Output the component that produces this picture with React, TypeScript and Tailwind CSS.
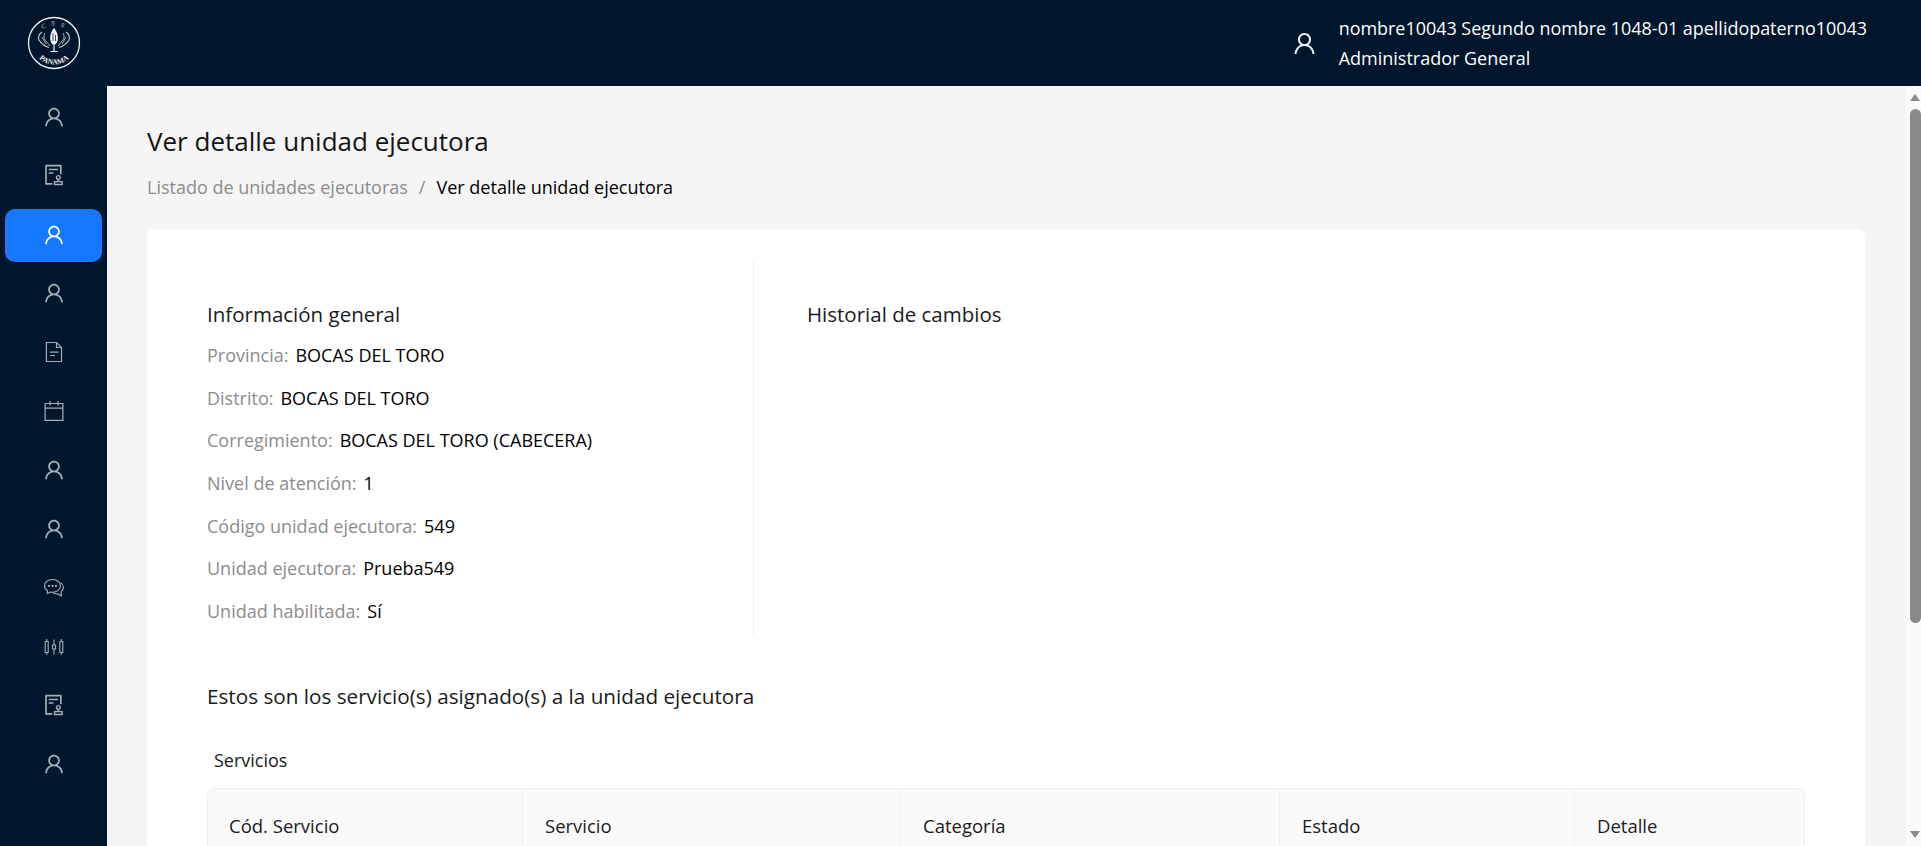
import { AiOutlineAudit, AiOutlineUser } from "react-icons/ai";
import type { ComponentType } from "react";

type IconProps = { size?: number };

function ChatIcon({ size = 22 }: IconProps) {
  return (
    <svg width={size} height={size} viewBox="0 0 22 22" fill="none" stroke="currentColor" strokeWidth="1.1">
      <path d="M9.500 2.500c-4.400 0-8 2.700-8 6.300 0 2 1.100 3.700 3 4.900l-.2 2.800 3-1.500c.7.1 1.400.2 2.200.2 4.400 0 8-2.800 8-6.400s-3.600-6.300-8-6.300z" />
      <path d="M17.800 5.600c1.700 1.100 2.700 2.800 2.700 4.700 0 1.800-.9 3.400-2.400 4.500l.3 4-3.700-1.900c-1.800.2-4-.4-5.200-1.500" />
      <circle cx="6" cy="8.800" r=".6" fill="currentColor" />
      <circle cx="9.500" cy="8.800" r=".6" fill="currentColor" />
      <circle cx="13" cy="8.800" r=".6" fill="currentColor" />
    </svg>
  );
}

function DocIcon({ size = 22 }: IconProps) {
  return (
    <svg width={size} height={size} viewBox="0 0 22 22" fill="none" stroke="currentColor" strokeWidth="1.200">
      <path d="M3.400 1.500h10.100l5 5v14H3.400z" />
      <path d="M13.500 1.500v5h5M7 11.200h8.500M7 14.500h5" />
    </svg>
  );
}

function CalendarIcon({ size = 22 }: IconProps) {
  return (
    <svg width={size} height={size} viewBox="0 0 22 22" fill="none" stroke="currentColor" strokeWidth="1.200">
      <path d="M2.100 3.500h17.800v16.900H2.100zM2.100 8.200h17.800M7 1v4.500M15 1v4.500" />
    </svg>
  );
}

function CandleIcon({ size = 22 }: IconProps) {
  return (
    <svg width={size} height={size} viewBox="0 0 22 22" fill="none" stroke="currentColor" strokeWidth="1.100">
      <path d="M2.200 5.500h3v11h-3zM3.700 3v2.500M3.700 16.500V19M9.500 9h3v4h-3zM11 3.500V9M11 13v5.500M16.800 5.500h3v11h-3zM18.300 3v2.500M18.300 16.500V19" />
    </svg>
  );
}

function UserIcon({ size = 24 }: IconProps) {
  return <AiOutlineUser size={size + 2} />;
}

function AuditIcon({ size = 24 }: IconProps) {
  return <AiOutlineAudit size={size + 2} />;
}

function Logo() {
  return (
    <svg width="54" height="54" viewBox="0 0 54 54" fill="none">
      <circle cx="27" cy="27" r="25.500" stroke="#f2f4f6" strokeWidth="1.300" />
      <path id="logo-top" d="M9.500 27a17.500 17.500 0 0 1 35 0" stroke="none" />
      <path id="logo-bottom" d="M5.500 27a21.500 21.500 0 0 0 43 0" stroke="none" />
      <text fontSize="6.500" fill="#c8cdd3" fontFamily="'Liberation Serif', serif" letterSpacing="5" textAnchor="middle">
        <textPath href="#logo-top" startOffset="52%">CSS</textPath>
      </text>
      <text fontSize="7.500" fontWeight="700" fill="#eef0f2" fontFamily="'Liberation Serif', serif" textAnchor="middle">
        <textPath href="#logo-bottom" startOffset="50%">PANAMA</textPath>
      </text>
      <path d="M27 12c-3.500 4-4.500 9-3.500 13 .6 2.200 2 3.500 3.500 4 1.500-.5 2.900-1.800 3.500-4 1-4 0-9-3.500-13z" fill="#f2f4f6" />
      <path d="M26 17v8M28.500 19v6" stroke="#3b4a5a" strokeWidth="1" />
      <path d="M27 29v6M23.500 35.500h7" stroke="#f2f4f6" strokeWidth="1.200" />
      <path d="M15 16c-3 2-4 5-3 8 2 3.500 5 6 10 7.500M39 16c3 2 4 5 3 8-2 3.500-5 6-10 7.500" stroke="#c9ced4" strokeWidth="1.100" />
      <path d="M18 17c-2 3-1 6 1 8l4 5M36 17c2 3 1 6-1 8l-4 5M15 21l4 7M39 21l-4 7" stroke="#aeb5bd" strokeWidth="1" />
    </svg>
  );
}

const menu: { icon: ComponentType<IconProps>; active?: boolean }[] = [
  { icon: UserIcon },
  { icon: AuditIcon },
  { icon: UserIcon, active: true },
  { icon: UserIcon },
  { icon: DocIcon },
  { icon: CalendarIcon },
  { icon: UserIcon },
  { icon: UserIcon },
  { icon: ChatIcon },
  { icon: CandleIcon },
  { icon: AuditIcon },
  { icon: UserIcon },
];

const info = [
  ["Provincia:", "BOCAS DEL TORO"],
  ["Distrito:", "BOCAS DEL TORO"],
  ["Corregimiento:", "BOCAS DEL TORO (CABECERA)"],
  ["Nivel de atención:", "1"],
  ["Código unidad ejecutora:", "549"],
  ["Unidad ejecutora:", "Prueba549"],
  ["Unidad habilitada:", "Sí"],
];

const columns = [
  { label: "Cód. Servicio", width: "w-[315px]", pad: "pl-[21px]" },
  { label: "Servicio", width: "w-[378px]", pad: "pl-[22px]" },
  { label: "Categoría", width: "w-[379px]", pad: "pl-[22px]" },
  { label: "Estado", width: "w-[295px]", pad: "pl-[22px]" },
  { label: "Detalle", width: "flex-1", pad: "pl-[22px]" },
];

export default function App() {
  return (
    <div className="flex h-[846px] w-full flex-col overflow-hidden bg-[#f5f5f5] font-['Open_Sans','Liberation_Sans',sans-serif] text-[18px] text-[#1a1a1a]">
      <header className="flex h-[86px] shrink-0 items-center justify-between bg-[#00162c] text-white">
        <div className="flex w-[107px] justify-center">
          <Logo />
        </div>
        <div className="flex items-center gap-[21px] pr-[54px]">
          <AiOutlineUser size={27} className="text-[#f2f4f6]" />
          <div>
            <div className="text-[17.950px] leading-[30px]">nombre10043 Segundo nombre 1048-01 apellidopaterno10043</div>
            <div className="text-[18px] leading-[30px] font-medium">Administrador General</div>
          </div>
        </div>
      </header>
      <div className="flex min-h-0 flex-1">
        <nav className="flex w-[107px] shrink-0 flex-col items-center gap-[5.900px] bg-[#00162c] px-[5px] pt-[5px]">
          {menu.map((item, i) => {
            const Icon = item.icon;
            return (
              <div
                key={i}
                className={
                  item.active
                    ? "flex h-[53px] w-full items-center justify-center rounded-[10px] bg-[#1677ff] pb-[1px] text-white"
                    : "flex h-[53px] w-full items-center justify-center pb-[2px] text-[#a6adb4]"
                }
              >
                <Icon size={22} />
              </div>
            );
          })}
        </nav>
        <main className="min-w-0 flex-1 overflow-hidden pt-[39px] pl-[40px] pr-[41px]">
          <h1 className="text-[26px] leading-[32px] font-medium text-[#141414]">Ver detalle unidad ejecutora</h1>
          <div className="mt-[18px] flex gap-[11px] text-[18px] leading-[24px]">
            <span className="text-[#8c8c8c]">Listado de unidades ejecutoras</span>
            <span className="text-[#8c8c8c]">/</span>
            <span className="text-black">Ver detalle unidad ejecutora</span>
          </div>
          <section className="mt-[30px] rounded-[8px] bg-white px-[60px] pt-[32px]">
            <div className="flex">
              <div className="w-[547px] border-r border-[#f0f0f0] pt-[39px] pb-[3px]">
                <h2 className="text-[20.500px] leading-[28px]">Información general</h2>
                <dl className="mt-[6px]">
                  {info.map(([label, value]) => (
                    <div key={label} className="flex h-[42.700px] items-center gap-[7px] text-[18px]">
                      <dt className="text-[#8c8c8c]">{label}</dt>
                      <dd className="text-black">{value}</dd>
                    </div>
                  ))}
                </dl>
              </div>
              <div className="flex-1 pt-[39px] pl-[53px]">
                <h2 className="text-[20.500px] leading-[28px]">Historial de cambios</h2>
              </div>
            </div>
            <h2 className="mt-[46px] text-[20.700px] leading-[28px]">Estos son los servicio(s) asignado(s) a la unidad ejecutora</h2>
            <div className="mt-[38px] pl-[7px] text-[18px] leading-[24px]">Servicios</div>
            <div className="mt-[16px] flex h-[80px] rounded-t-[8px] border border-[#f0f0f0] bg-[#fafafa] font-medium">
              {columns.map((c, i) => (
                <div
                  key={c.label}
                  className={`${c.width} ${c.pad} ${i < 4 ? "border-r border-[#f0f0f0]" : ""} flex items-center pb-[4px] text-[18.500px]`}
                >
                  {c.label}
                </div>
              ))}
            </div>
          </section>
        </main>
        <div className="relative w-[15px] shrink-0 bg-[#fafafa]">
          <div className="absolute top-[8px] left-[4px] h-0 w-0 border-x-[5.500px] border-b-[7px] border-x-transparent border-b-[#8a8a8a]" />
          <div className="absolute top-[23px] left-[4px] h-[514px] w-[11px] rounded-full bg-[#8a8a8a]" />
          <div className="absolute bottom-[8px] left-[4px] h-0 w-0 border-x-[5.500px] border-t-[7px] border-x-transparent border-t-[#8a8a8a]" />
        </div>
      </div>
    </div>
  );
}
